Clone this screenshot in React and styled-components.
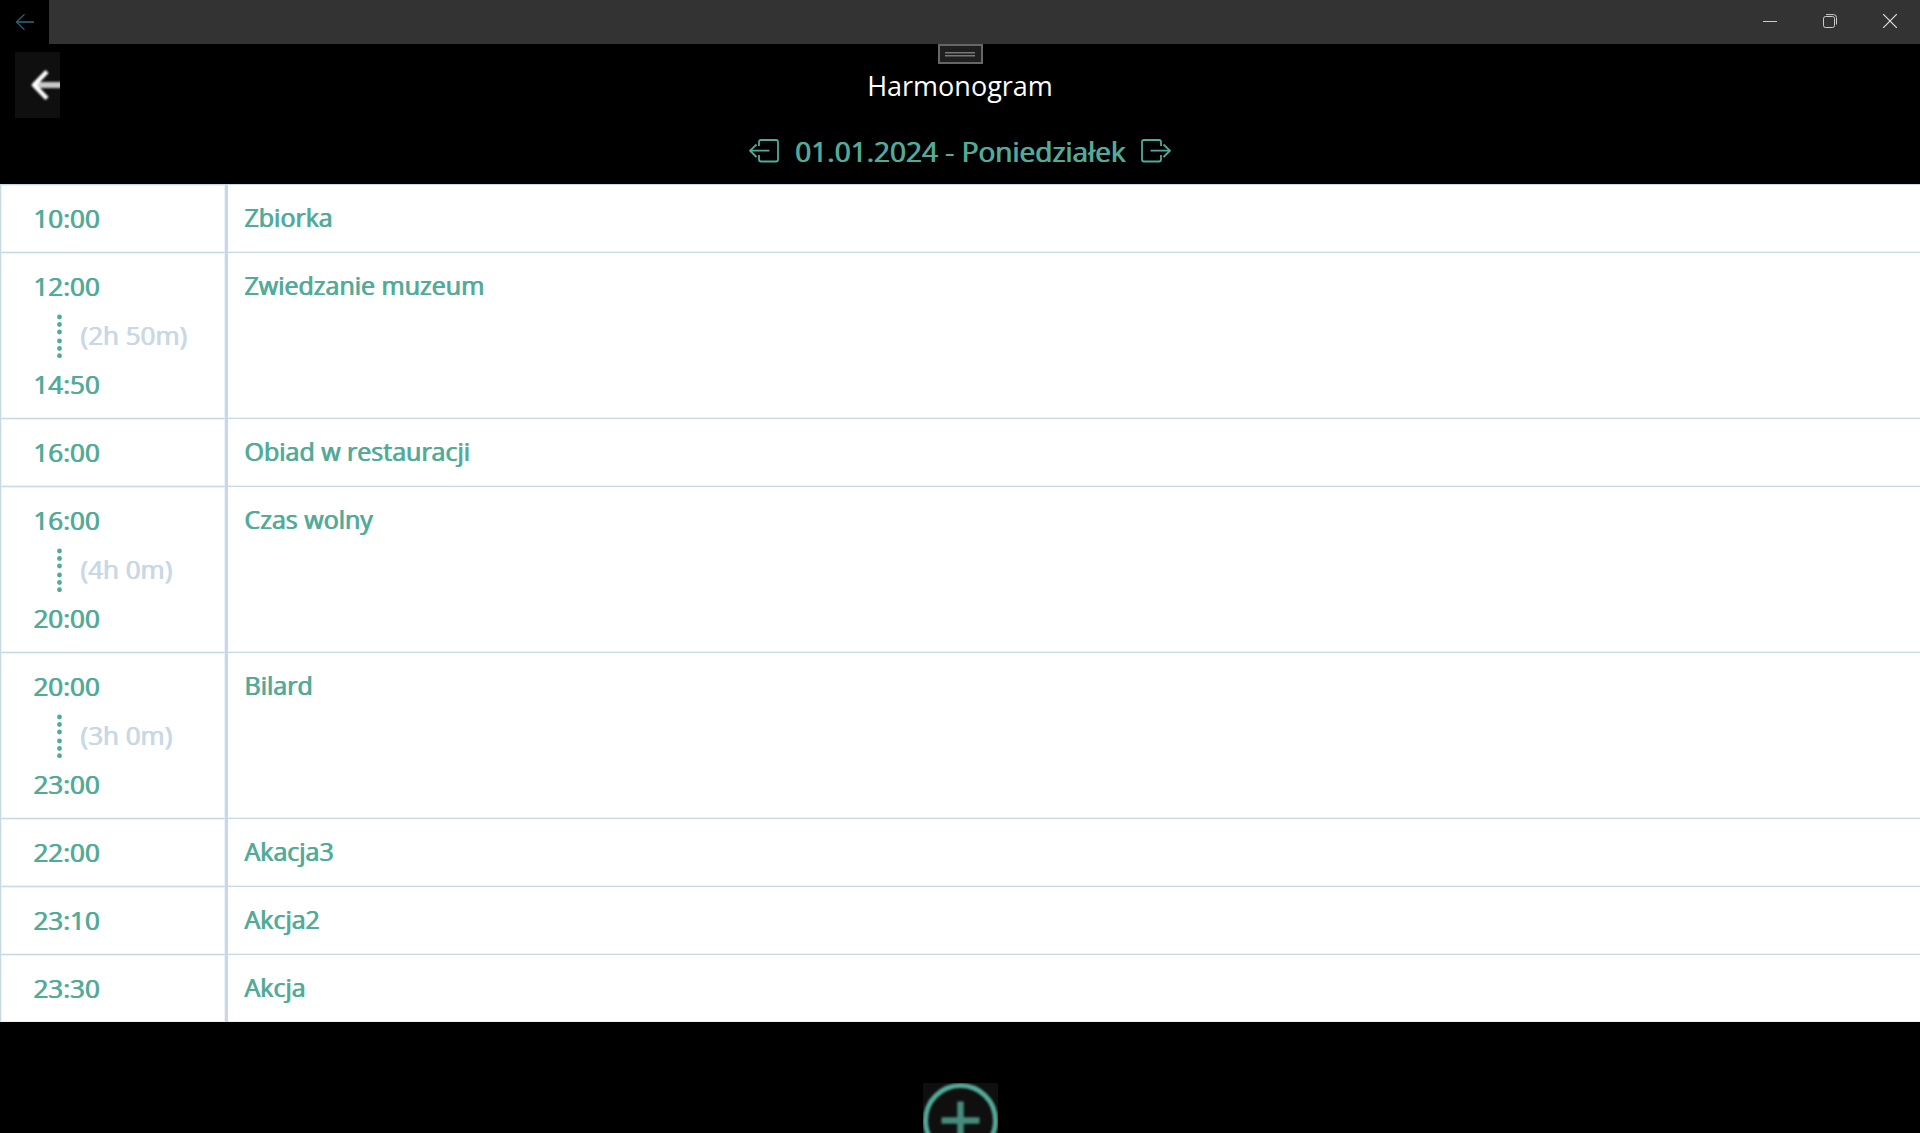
import React from "react";
import styled, { createGlobalStyle } from "styled-components";

const teal = "#52ab98";
const mist = "#c8d8e4";
const haze = "#edf3f7";

const GlobalStyle = createGlobalStyle`
  *, *::before, *::after { box-sizing: border-box; }
  body {
    margin: 0;
    background: #000;
    font-family: "Open Sans", "Noto Sans", sans-serif;
  }
  button {
    display: flex;
    align-items: center;
    justify-content: center;
    flex: none;
    margin: 0;
    padding: 0;
    border: 0;
    background: none;
    cursor: pointer;
  }
  svg { display: block; flex: none; }
`;

const Window = styled.div`
  display: flex;
  flex-direction: column;
  height: 100vh;
  overflow: hidden;
  background: #000;
`;

const TitleBar = styled.div`
  display: flex;
  flex: none;
  height: 44px;
  background: #333;
`;

const TitleBack = styled.button`
  width: 49px;
  background: #000;
`;

const Caption = styled.div`
  display: flex;
  margin-left: auto;
  padding-bottom: 2px;
`;

const CaptionButton = styled.button`
  width: 60px;
`;

const Header = styled.header`
  display: grid;
  grid-template-columns: 60px 1fr 60px;
  flex: none;
  height: 140px;
`;

const BackButton = styled.button`
  width: 45px;
  height: 66px;
  margin: 8px 0 0 15px;
  background: #0f0f0f;
  overflow: hidden;
`;

const SoftIcon = styled.svg`
  filter: blur(1px);
`;

const HeaderCenter = styled.div`
  display: flex;
  flex-direction: column;
  align-items: center;
`;

const Handle = styled.button`
  width: 45px;
  height: 20px;
  border: 2px solid #666;
  background: #1f1f1f;
`;

const Title = styled.h1`
  margin: 3px 0 0;
  color: #fff;
  font-size: 27px;
  font-weight: 400;
  line-height: 38px;
`;

const DateNav = styled.nav`
  display: flex;
  align-items: center;
  gap: 16px;
  margin-top: 27px;
`;

const DateLabel = styled.h2`
  margin: 0;
  color: ${teal};
  font-size: 28px;
  font-weight: 400;
  line-height: 38px;
  text-shadow: 1px 0 currentColor;
`;

const Schedule = styled.table`
  flex: none;
  width: 100%;
  border-spacing: 0;
  table-layout: fixed;
  background: #fff;
  text-shadow: 1px 0 currentColor;
`;

const TimeColumn = styled.col`
  width: 228px;
`;

const TimeCell = styled.th`
  padding: 9px 0 9px 32px;
  border: solid ${mist};
  border-width: 1px 3px 0 1px;
  box-shadow: inset 0 0 0 1px ${haze};
  color: ${teal};
  font-size: 26px;
  font-weight: 400;
  line-height: 49px;
  text-align: left;
  vertical-align: top;
`;

const EventCell = styled.td`
  padding: 9px 16px;
  border-top: 1px solid ${mist};
  box-shadow: inset 0 -1px ${haze};
  color: ${teal};
  font-size: 25px;
  line-height: 47px;
  vertical-align: top;
`;

const Time = styled.time`
  display: block;
`;

const Duration = styled.div`
  display: flex;
  align-items: center;
  gap: 18px;
  padding-left: 24px;
  color: ${mist};
`;

const Footer = styled.footer`
  display: flex;
  justify-content: center;
  flex: none;
  padding-top: 61px;
`;

const AddButton = styled.button`
  width: 75px;
  height: 75px;
  background: #0f0f0f;
  overflow: hidden;
`;

const events = [
  { start: "10:00", name: "Zbiorka" },
  { start: "12:00", end: "14:50", length: "(2h 50m)", name: "Zwiedzanie muzeum" },
  { start: "16:00", name: "Obiad w restauracji" },
  { start: "16:00", end: "20:00", length: "(4h 0m)", name: "Czas wolny" },
  { start: "20:00", end: "23:00", length: "(3h 0m)", name: "Bilard" },
  { start: "22:00", name: "Akacja3" },
  { start: "23:10", name: "Akcja2" },
  { start: "23:30", name: "Akcja" },
];

function Dots() {
  return (
    <svg width="5" height="44" viewBox="0 0 5 44" fill={teal} aria-hidden="true">
      {[3, 10.5, 18, 27, 34.5, 41.7].map((y) => (
        <circle key={y} cx="2.5" cy={y} r="2.4" />
      ))}
    </svg>
  );
}

function DayIcon({ next }) {
  return (
    <svg width="30" height="24" viewBox="0 1 30 24" fill="none" stroke={teal} strokeWidth="1.8" aria-hidden="true">
      <g transform={next ? "translate(30 0) scale(-1 1)" : undefined}>
        <path d="M10 8V4Q10 2 12 2H27Q29 2 29 4V21.500Q29 23.500 27 23.500H12Q10 23.500 10 21.500V17" />
        <path d="M1 12.700H20.500M7.500 6.500L1 12.700L7.500 19" />
      </g>
    </svg>
  );
}

export default function App() {
  return (
    <Window>
      <GlobalStyle />
      <TitleBar>
        <TitleBack aria-label="Wstecz">
          <svg width="19" height="16" viewBox="0 0 19 16" fill="none" stroke="#2b6777" aria-hidden="true">
            <path d="M9.500 0.300L1.500 8L9.500 15.700" strokeWidth="1.200" />
            <path d="M1.500 8H19" strokeWidth="2" strokeOpacity="0.8" />
          </svg>
        </TitleBack>
        <Caption>
          <CaptionButton aria-label="Minimalizuj">
            <svg width="14" height="14" viewBox="0 0 14 14" stroke="#ccc" aria-hidden="true">
              <path d="M0 7.500H14" />
            </svg>
          </CaptionButton>
          <CaptionButton aria-label="Przywróć">
            <svg width="14" height="14" viewBox="0 0 14 14" fill="none" stroke="#ccc" aria-hidden="true">
              <rect x="0.500" y="2.500" width="11" height="11" rx="2" />
              <path d="M3 0.600H10.500Q13.500 0.600 13.500 3.600V10.500" />
            </svg>
          </CaptionButton>
          <CaptionButton aria-label="Zamknij">
            <svg width="14" height="14" viewBox="0 0 14 14" stroke="#e0e0e0" aria-hidden="true">
              <path d="M0 0L14 14M14 0L0 14" strokeWidth="1.200" />
            </svg>
          </CaptionButton>
        </Caption>
      </TitleBar>
      <Header>
        <BackButton aria-label="Powrót">
          <SoftIcon width="49" height="66" viewBox="-2 0 49 66" fill="none" aria-hidden="true">
            <path d="M20 33H49" stroke="#c8c8c8" strokeWidth="6" />
            <path d="M32 19.500L19 33L32 46.500" stroke="#fff" strokeWidth="4.500" strokeLinejoin="round" />
          </SoftIcon>
        </BackButton>
        <HeaderCenter>
          <Handle aria-label="Pasek narzędzi">
            <svg width="30" height="6" viewBox="0 0 30 6" aria-hidden="true">
              <path d="M0 1.500H30M0 4.500H30" stroke="#777" />
              <path d="M0 2.500H30M0 5.500H30" stroke="#4a4a4a" />
            </svg>
          </Handle>
          <Title>Harmonogram</Title>
          <DateNav aria-label="Dzień">
            <button aria-label="Poprzedni dzień"><DayIcon /></button>
            <DateLabel>01.01.2024 - Poniedziałek</DateLabel>
            <button aria-label="Następny dzień"><DayIcon next /></button>
          </DateNav>
        </HeaderCenter>
      </Header>
      <Schedule aria-label="Harmonogram dnia">
        <colgroup>
          <TimeColumn />
          <col />
        </colgroup>
        <tbody>
          {events.map((event) => (
            <tr key={event.name}>
              <TimeCell scope="row">
                <Time>{event.start}</Time>
                {event.end && (
                  <>
                    <Duration>
                      <Dots />
                      {event.length}
                    </Duration>
                    <Time>{event.end}</Time>
                  </>
                )}
              </TimeCell>
              <EventCell>{event.name}</EventCell>
            </tr>
          ))}
        </tbody>
      </Schedule>
      <Footer>
        <AddButton aria-label="Dodaj">
          <SoftIcon width="75" height="75" viewBox="0 0 75 75" fill="none" stroke={teal} aria-hidden="true">
            <circle cx="37.500" cy="37.500" r="35" strokeWidth="5" />
            <path d="M18.500 37.500H56.500M37.500 18.500V56.500" strokeWidth="6.500" strokeOpacity="0.8" />
          </SoftIcon>
        </AddButton>
      </Footer>
    </Window>
  );
}
